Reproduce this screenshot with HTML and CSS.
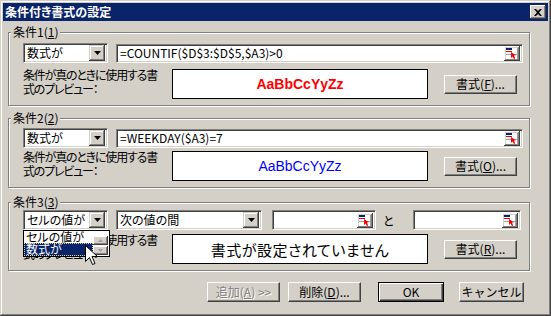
FILE: index.html
```html
<!DOCTYPE html>
<html lang="ja">
<head>
    <meta charset="UTF-8">
    <title>条件付き書式の設定</title>
    <link rel="stylesheet" href="styles.css">
</head>
<body>
    <div class="window">
        <div class="titlebar">
            <span class="title">条件付き書式の設定</span>
            <span class="close">
                <svg width="8" height="7" viewBox="0 0 8 7"><path d="M0 0h2l2 2 2-2h2L5 3.5 8 7H6L4 5 2 7H0l3-3.5z" fill="#000"/></svg>
            </span>
        </div>

        <div class="content">
            <!-- 条件1 -->
            <div class="group g1">
                <span class="legend">条件1(<u>1</u>)</span>
                <div class="row">
                    <div class="select sunken"><span>数式が</span><span class="drop"><svg width="7" height="4"><path d="M0 0h7L3.5 4z"/></svg></span></div>
                    <div class="refedit sunken wide"><span>=COUNTIF($D$3:$D$5,$A3)&gt;0</span><span class="refbtn"><svg width="12" height="11" viewBox="0 0 12 11"><rect x="0" y="0" width="12" height="11" fill="#fff"/><rect x="0" y="0" width="6" height="2" fill="#0a246a"/><rect x="0" y="3" width="6" height="1" fill="#e00"/><rect x="0" y="6" width="12" height="1" fill="#a0a0a0"/><rect x="11" y="0" width="1" height="11" fill="#a0a0a0"/><path d="M5 4v6l1.5-1.5L8 11l1.2-.6L8 7.5h2z" fill="#f00"/></svg></span></div>
                </div>
                <div class="preview-row">
                    <div class="preview-label">条件が真のときに使用する書<br>式のプレビュー：</div>
                    <div class="preview-box"><span class="sample red">AaBbCcYyZz</span></div>
                    <button class="btn fmt">書式(<u>F</u>)...</button>
                </div>
            </div>

            <!-- 条件2 -->
            <div class="group g2">
                <span class="legend">条件2(<u>2</u>)</span>
                <div class="row">
                    <div class="select sunken"><span>数式が</span><span class="drop"><svg width="7" height="4"><path d="M0 0h7L3.5 4z"/></svg></span></div>
                    <div class="refedit sunken wide"><span>=WEEKDAY($A3)=7</span><span class="refbtn"><svg width="12" height="11" viewBox="0 0 12 11"><rect x="0" y="0" width="12" height="11" fill="#fff"/><rect x="0" y="0" width="6" height="2" fill="#0a246a"/><rect x="0" y="3" width="6" height="1" fill="#e00"/><rect x="0" y="6" width="12" height="1" fill="#a0a0a0"/><rect x="11" y="0" width="1" height="11" fill="#a0a0a0"/><path d="M5 4v6l1.5-1.5L8 11l1.2-.6L8 7.5h2z" fill="#f00"/></svg></span></div>
                </div>
                <div class="preview-row">
                    <div class="preview-label">条件が真のときに使用する書<br>式のプレビュー：</div>
                    <div class="preview-box"><span class="sample blue">AaBbCcYyZz</span></div>
                    <button class="btn fmt">書式(<u>O</u>)...</button>
                </div>
            </div>

            <!-- 条件3 -->
            <div class="group g3">
                <span class="legend">条件3(<u>3</u>)</span>
                <div class="row">
                    <div class="select sunken"><span>セルの値が</span><span class="drop"><svg width="7" height="4"><path d="M0 0h7L3.5 4z"/></svg></span></div>
                    <div class="select sunken op"><span>次の値の間</span><span class="drop"><svg width="7" height="4"><path d="M0 0h7L3.5 4z"/></svg></span></div>
                    <div class="refedit sunken val1"><span></span><span class="refbtn"><svg width="12" height="11" viewBox="0 0 12 11"><rect x="0" y="0" width="12" height="11" fill="#fff"/><rect x="0" y="0" width="6" height="2" fill="#0a246a"/><rect x="0" y="3" width="6" height="1" fill="#e00"/><rect x="0" y="6" width="12" height="1" fill="#a0a0a0"/><rect x="11" y="0" width="1" height="11" fill="#a0a0a0"/><path d="M5 4v6l1.5-1.5L8 11l1.2-.6L8 7.5h2z" fill="#f00"/></svg></span></div>
                    <span class="and">と</span>
                    <div class="refedit sunken val2"><span></span><span class="refbtn"><svg width="12" height="11" viewBox="0 0 12 11"><rect x="0" y="0" width="12" height="11" fill="#fff"/><rect x="0" y="0" width="6" height="2" fill="#0a246a"/><rect x="0" y="3" width="6" height="1" fill="#e00"/><rect x="0" y="6" width="12" height="1" fill="#a0a0a0"/><rect x="11" y="0" width="1" height="11" fill="#a0a0a0"/><path d="M5 4v6l1.5-1.5L8 11l1.2-.6L8 7.5h2z" fill="#f00"/></svg></span></div>
                </div>
                <div class="preview-row">
                    <div class="preview-label">条件が真のときに使用する書<br>式のプレビュー：</div>
                    <div class="preview-box"><span class="noformat">書式が設定されていません</span></div>
                    <button class="btn fmt">書式(<u>R</u>)...</button>
                </div>

                <!-- 開いているドロップダウン -->
                <div class="popup">
                    <div class="items">
                        <div class="item">セルの値が</div>
                        <div class="item selected">数式が</div>
                    </div>
                    <div class="scroll">
                        <span class="sbtn"><svg width="5" height="3"><path d="M2.5 0L5 3H0z" fill="#a0a0a0"/></svg></span>
                        <span class="sbtn"><svg width="5" height="3"><path d="M0 0h5L2.5 3z" fill="#a0a0a0"/></svg></span>
                    </div>
                </div>
                <svg class="cursor" width="13" height="21" viewBox="0 0 13 21"><path d="M.5.5v16l4-4 3 7 2.5-1-3-7h5.5z" fill="#fff" stroke="#000"/></svg>
            </div>

            <div class="buttons">
                <button class="btn disabled add">追加(<u>A</u>) &gt;&gt;</button>
                <button class="btn del">削除(<u>D</u>)...</button>
                <button class="btn default ok">OK</button>
                <button class="btn cancel">キャンセル</button>
            </div>
        </div>
    </div>
</body>
</html>
```
FILE: styles.css
```css
* {
    box-sizing: border-box;
}

body {
    margin: 0;
    background: #d4d0c8;
    font-family: "Noto Sans CJK JP", sans-serif;
    font-size: 12px;
    font-feature-settings: "palt";
    color: #000;
}

u {
    text-decoration: underline;
    text-underline-offset: 1px;
}

.window {
    width: 551px;
    height: 316px;
    padding: 3px;
    background: #d4d0c8;
    box-shadow: inset -1px -1px 0 #404040, inset 1px 1px 0 #d4d0c8, inset -2px -2px 0 #808080, inset 2px 2px 0 #fff;
}

.titlebar {
    height: 18px;
    background: #0a246a;
    color: #fff;
    font-weight: bold;
    display: flex;
    align-items: center;
    justify-content: space-between;
    padding: 0 2px 0 2px;
    line-height: 18px;
}

.close {
    width: 16px;
    height: 14px;
    background: #d4d0c8;
    display: flex;
    align-items: center;
    justify-content: center;
    box-shadow: inset -1px -1px 0 #404040, inset 1px 1px 0 #fff, inset -2px -2px 0 #808080;
}

.content {
    padding: 11px 0 0 5px;
}

/* グループ枠 */
.group {
    position: relative;
    width: 522px;
    border: 1px solid #808080;
    box-shadow: 1px 1px 0 #fff, inset 1px 1px 0 #fff;
    padding-left: 14px;
}

.g1 {
    height: 74px;
    padding-top: 10px;
}

.g2 {
    height: 70px;
    margin-top: 12px;
    padding-top: 9px;
}

.g3 {
    height: 69px;
    margin-top: 14px;
    padding-top: 7px;
}

.legend {
    position: absolute;
    top: -8px;
    left: 2px;
    padding: 0 2px;
    background: #d4d0c8;
    line-height: 14px;
}

.row {
    display: flex;
    align-items: center;
    height: 20px;
}

.sunken {
    border: 1px solid;
    border-color: #808080 #fff #fff #808080;
    box-shadow: inset 1px 1px 0 #404040, inset -1px -1px 0 #d4d0c8;
    background: #fff;
}

.select {
    width: 85px;
    height: 20px;
    display: flex;
    align-items: center;
    padding: 2px 2px 2px 3px;
    line-height: 14px;
    white-space: nowrap;
}

.select.op {
    width: 146px;
    margin-left: 8px;
}

.drop {
    margin-left: auto;
    width: 16px;
    height: 16px;
    flex: none;
    background: #d4d0c8;
    display: flex;
    align-items: center;
    justify-content: center;
    box-shadow: inset -1px -1px 0 #404040, inset 1px 1px 0 #d4d0c8, inset -2px -2px 0 #808080, inset 2px 2px 0 #fff;
}

.refedit {
    height: 19px;
    display: flex;
    align-items: center;
    padding: 2px 2px 2px 3px;
    white-space: nowrap;
    line-height: 14px;
}

.refedit.wide {
    width: 407px;
    margin-left: 8px;
}

.refedit.val1 {
    width: 104px;
    height: 20px;
    margin-left: 10px;
}

.refedit.val2 {
    width: 108px;
    height: 20px;
}

.and {
    width: 37px;
    padding-left: 7px;
}

.refbtn {
    margin-left: auto;
    width: 16px;
    height: 15px;
    flex: none;
    background: #d4d0c8;
    display: flex;
    align-items: center;
    justify-content: center;
    box-shadow: inset -1px -1px 0 #404040, inset 1px 1px 0 #fff, inset -2px -2px 0 #808080;
}

/* プレビュー */
.preview-row {
    display: flex;
    align-items: center;
    margin-top: 6px;
}

.g2 .preview-row {
    margin-top: 3px;
}

.g3 .preview-row {
    margin-top: 4px;
}

.preview-label {
    width: 149px;
    line-height: 14px;
    align-self: flex-start;
    margin-top: -1px;
    white-space: nowrap;
    letter-spacing: -1.2px;
}

.preview-box {
    width: 256px;
    height: 30px;
    border: 1px solid #000;
    background: #fff;
    display: flex;
    align-items: center;
    justify-content: center;
}

.sample {
    font-family: "Liberation Sans", Arial, sans-serif;
    font-size: 14px;
}

.sample.red {
    color: #f00;
    font-weight: bold;
}

.sample.blue {
    color: #00f;
}

.noformat {
    font-size: 15px;
    letter-spacing: 0.5px;
}

.btn {
    font-family: inherit;
    font-size: 12px;
    color: #000;
    background: #d4d0c8;
    border: 1px solid;
    border-color: #fff #404040 #404040 #fff;
    box-shadow: inset -1px -1px 0 #808080, inset 1px 1px 0 #d4d0c8;
    height: 20px;
    padding: 0;
    line-height: 16px;
}

.fmt {
    width: 73px;
    height: 19px;
    margin-left: 16px;
}

/* ドロップダウンリスト */
.popup {
    position: absolute;
    left: 14px;
    top: 27px;
    width: 87px;
    height: 27px;
    border: 1px solid #000;
    background: #fff;
    display: flex;
    z-index: 1;
}

.items {
    flex: 1;
}

.item {
    height: 12px;
    line-height: 12px;
    padding-left: 2px;
    white-space: nowrap;
}

.item.selected {
    height: 13px;
    background: #0a246a;
    color: #fff;
    outline: 1px dotted #e8d890;
    outline-offset: -1px;
}

.scroll {
    width: 16px;
    display: flex;
    flex-direction: column;
    justify-content: flex-end;
    gap: 1px;
    padding: 0 1px 1px 0;
}

.sbtn {
    height: 9px;
    display: flex;
    align-items: center;
    justify-content: center;
    background: #d4d0c8;
    box-shadow: inset -1px -1px 0 #404040, inset 1px 1px 0 #fff, inset -2px -2px 0 #808080;
}

.cursor {
    position: absolute;
    left: 76px;
    top: 42px;
    z-index: 2;
}

/* 下部ボタン */
.buttons {
    display: flex;
    justify-content: flex-end;
    margin-top: 11px;
    padding-right: 24px;
}

.add {
    width: 73px;
    color: #808080;
    text-shadow: 1px 1px 0 #fff;
}

.del {
    width: 73px;
    margin-left: 8px;
}

.ok {
    width: 66px;
    margin-left: 17px;
    border: 1px solid #000;
    box-shadow: inset 1px 1px 0 #fff, inset -1px -1px 0 #404040, inset -2px -2px 0 #808080;
}

.cancel {
    width: 65px;
    margin-left: 15px;
}
```
